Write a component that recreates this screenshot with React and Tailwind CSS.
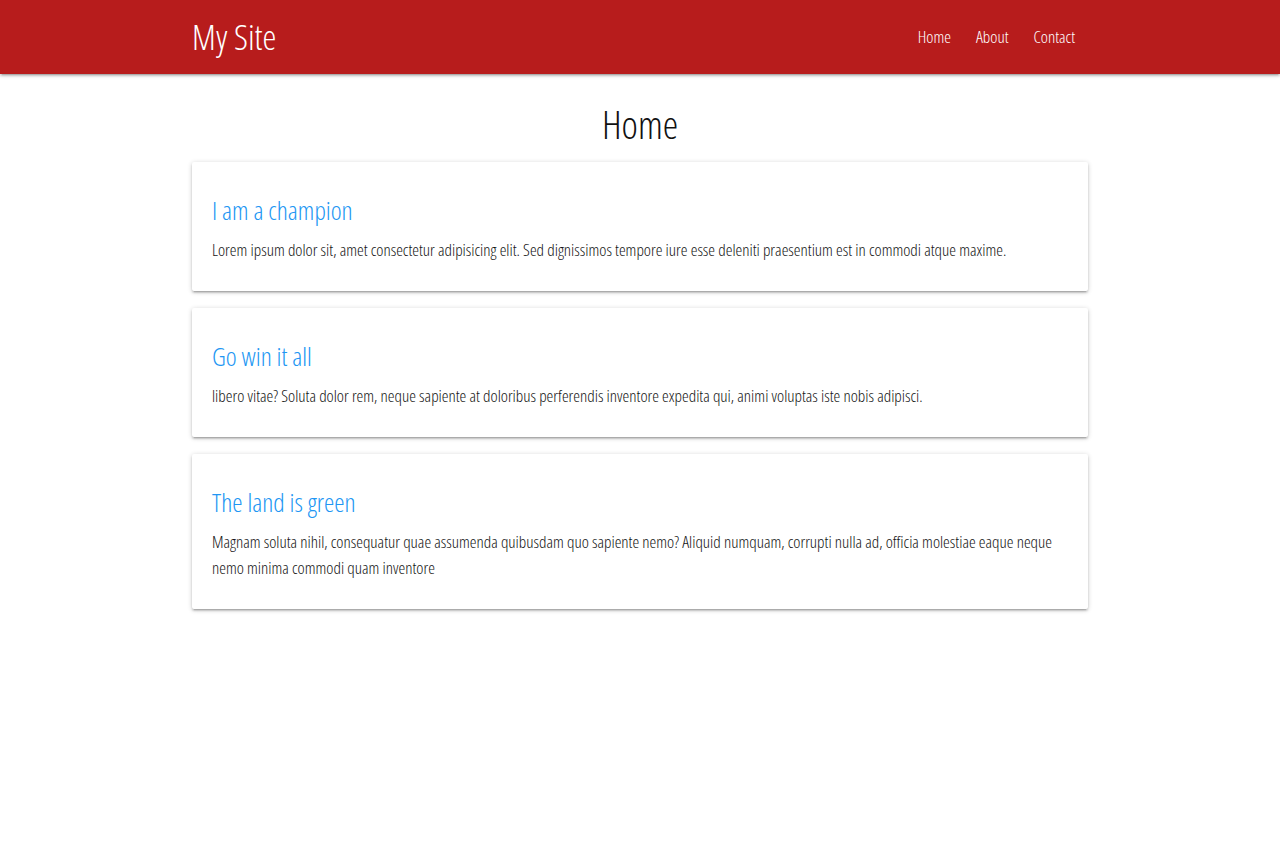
const links = ["Home", "About", "Contact"];

const posts = [
  {
    title: "I am a champion",
    body: "Lorem ipsum dolor sit, amet consectetur adipisicing elit. Sed dignissimos tempore iure esse deleniti praesentium est in commodi atque maxime.",
  },
  {
    title: "Go win it all",
    body: "libero vitae? Soluta dolor rem, neque sapiente at doloribus perferendis inventore expedita qui, animi voluptas iste nobis adipisci.",
  },
  {
    title: "The land is green",
    body: "Magnam soluta nihil, consequatur quae assumenda quibusdam quo sapiente nemo? Aliquid numquam, corrupti nulla ad, officia molestiae eaque neque nemo minima commodi quam inventore",
  },
];

const shadow =
  "shadow-[0_2px_2px_0_rgba(0,0,0,0.14),0_3px_1px_-2px_rgba(0,0,0,0.12),0_1px_5px_0_rgba(0,0,0,0.2)]";

export default function App() {
  return (
    <div className="min-h-screen bg-white font-['Open_Sans',sans-serif] font-stretch-condensed text-[#141414]">
      <nav className={`relative z-10 bg-[#b71c1c] ${shadow}`}>
        <div className="mx-auto flex h-[74px] w-[896px] items-center justify-between">
          <a href="#" className="text-[35px] font-[350] text-white">
            My Site
          </a>
          <ul className="flex items-center gap-[25px] pr-[13px]">
            {links.map((link) => (
              <li key={link}>
                <a href="#" className="text-[17px] font-[350] text-white">
                  {link}
                </a>
              </li>
            ))}
          </ul>
        </div>
      </nav>

      <main className="mx-auto w-[896px]">
        <h1 className="mt-[30px] mb-[19px] text-center text-[39px] leading-none font-[350] text-[#111]">Home</h1>

        <div className="flex flex-col gap-[17px]">
          {posts.map((post) => (
            <article key={post.title} className={`rounded-[2px] bg-white ${shadow}`}>
              <div className="px-5 pt-[32px] pb-7">
                <h2 className="mb-[11px] text-[26px] leading-8 font-[250] text-[#2196f3]">{post.title}</h2>
                <p className="text-[17px] leading-[26px] font-[350]">{post.body}</p>
              </div>
            </article>
          ))}
        </div>
      </main>
    </div>
  );
}
